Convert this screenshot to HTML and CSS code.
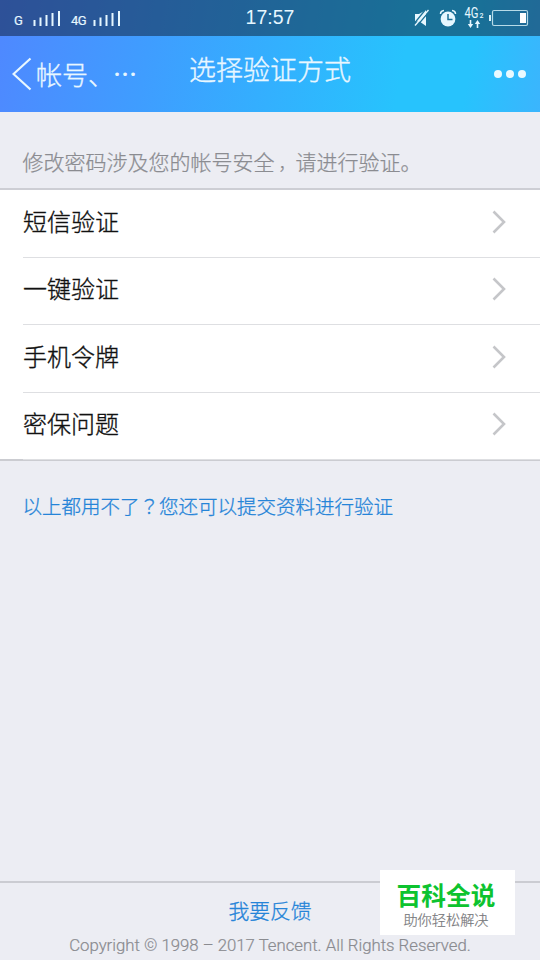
FILE: index.html
```html
<!DOCTYPE html>
<html lang="zh-CN">
<head>
<meta charset="utf-8">
<title>选择验证方式</title>
<link rel="stylesheet" href="styles.css">
</head>
<body>
<div class="screen">
  <div class="top">
    <div class="status">
      <div class="signals">
        <span class="net">G</span>
        <svg class="bars" width="28" height="17" viewBox="0 0 28 17"><path d="M1.500 10v6M7.500 7.500v8.500M13.500 5v11M19.500 3v13M26 1v15" stroke="#e6f7ff" stroke-width="2"/></svg>
        <span class="net net-4g">4G</span>
        <svg class="bars" width="28" height="17" viewBox="0 0 28 17"><path d="M1.500 10v6M7.500 7.500v8.500M13.500 5v11M19.500 3v13M26 1v15" stroke="#e6f7ff" stroke-width="2"/></svg>
      </div>
      <div class="clock">17:57</div>
      <div class="indicators">
        <svg width="128" height="36" viewBox="412 0 128 36" fill="none">
          <path d="M415 14h4l7-4v16l-6.500-4.500h-4.500z" fill="#e6f7ff"/>
          <path d="M416.500 26.500l13-15.500" stroke="#1b7096" stroke-width="1.200"/>
          <path d="M414.200 23.500l11-13.500" stroke="#1b7096" stroke-width="1.200"/>
          <path d="M415 25.500l13.500-15.500" stroke="#e6f7ff" stroke-width="1.300"/>
          <circle cx="448" cy="19" r="7.400" fill="#e6f7ff"/>
          <path d="M440.500 14q0-3 3.500-3.500M455.500 14q0-3-3.500-3.500" stroke="#e6f7ff" stroke-width="1.500"/>
          <path d="M448 14v5.500h4.500" stroke="#1b7096" stroke-width="1.500"/>
          <text class="mini" x="464.500" y="18" textLength="14" lengthAdjust="spacingAndGlyphs">4G</text>
          <text class="tiny" x="479.500" y="17.500">2</text>
          <path d="M470.500 20v6M477.500 28v-6" stroke="#e6f7ff" stroke-width="1.600"/>
          <path d="M467.800 24h5.400l-2.700 4zM474.800 24h5.400l-2.700-4z" fill="#e6f7ff"/>
          <rect x="492.500" y="10.500" width="35" height="15" rx="1.500" stroke="#b7dbe8" stroke-width="1.200"/>
          <path d="M489 15h2v6h-2z" fill="#d8f1fa"/>
          <path d="M520 13h6v10h-6z" fill="#fff"/>
        </svg>
      </div>
    </div>
    <div class="nav">
      <div class="back">
        <svg width="20" height="34" viewBox="0 0 20 34"><path d="M18.500 1.500L1.500 17l17 15.500" fill="none" stroke="#e9f7ff" stroke-width="2.200"/></svg>
        <span class="back-text">帐号、</span><span class="ellipsis">…</span>
      </div>
      <h1 class="title">选择验证方式</h1>
      <div class="more"><i class="dot"></i><i class="dot"></i><i class="dot"></i></div>
    </div>
  </div>
  <p class="hint">修改密码涉及您的帐号安全<span class="comma">，</span>请进行验证。</p>
  <ul class="list">
    <li class="item"><span>短信验证</span><svg class="chev" width="14" height="24" viewBox="0 0 14 24"><path d="M1.500 1.500L12 12 1.500 22.500"/></svg></li>
    <li class="item"><span>一键验证</span><svg class="chev" width="14" height="24" viewBox="0 0 14 24"><path d="M1.500 1.500L12 12 1.500 22.500"/></svg></li>
    <li class="item"><span>手机令牌</span><svg class="chev" width="14" height="24" viewBox="0 0 14 24"><path d="M1.500 1.500L12 12 1.500 22.500"/></svg></li>
    <li class="item"><span>密保问题</span><svg class="chev" width="14" height="24" viewBox="0 0 14 24"><path d="M1.500 1.500L12 12 1.500 22.500"/></svg></li>
  </ul>
  <a class="link">以上都用不了<span class="question" lang="zh-TW">？</span>您还可以提交资料进行验证</a>
  <div class="footer">
    <a class="feedback">我要反馈</a>
    <p class="copyright">Copyright © 1998 – 2017 Tencent. All Rights Reserved.</p>
  </div>
  <div class="badge">
    <div class="badge-name">百科全说</div>
    <div class="badge-sub">助你轻松解决</div>
  </div>
</div>
</body>
</html>
```
FILE: styles.css
```css
* { box-sizing: border-box; margin: 0; padding: 0; }
body {
  width: 540px;
  height: 960px;
  overflow: hidden;
  background: #ecedf3;
  font-family: "Liberation Sans", "Noto Sans CJK SC", sans-serif;
  font-weight: 300;
}
.screen {
  position: relative;
  display: flex;
  flex-direction: column;
  height: 960px;
}
.top {
  height: 112px;
  background: linear-gradient(100deg, #4f88ff 0%, #3f9dff 28%, #27c3fd 74%, #27c3fd 86%, #3bb5fd 100%);
}
.status {
  display: grid;
  grid-template-columns: 1fr auto 1fr;
  height: 36px;
  background: rgba(10, 20, 40, 0.48);
  color: #e6f7ff;
}
.signals { display: flex; padding: 10px 0 0 14px; }
.net { width: 19px; padding-top: 2px; font: 400 13px/17px Roboto, sans-serif; -webkit-text-stroke: 0.2px; }
.net-4g { width: 22px; margin-left: 10px; letter-spacing: -0.5px; }
.clock { font: 400 19.500px/35px "Liberation Sans", sans-serif; }
.indicators { display: flex; justify-content: flex-end; }
.mini { font: 400 14px Roboto, sans-serif; fill: #e6f7ff; }
.tiny { font: 500 7px Roboto, sans-serif; fill: #e6f7ff; }
.nav {
  display: grid;
  grid-template-columns: 189px 1fr auto;
  height: 76px;
  padding-right: 14px;
  color: #e9f7ff;
  -webkit-text-stroke: 0.35px;
}
.back { display: flex; align-items: center; padding-left: 12px; font-size: 26px; }
.back-text { margin-left: 4px; padding-bottom: 2px; }
.ellipsis { margin-left: -1px; padding-bottom: 2px; font-size: 24px; line-height: 30px; font-family: "Noto Sans CJK SC", sans-serif; -webkit-text-stroke: 0.8px; }
.title { font-size: 27px; font-weight: 300; line-height: 71px; }
.more { display: flex; align-items: center; gap: 4px; }
.dot { width: 8px; height: 8px; border-radius: 50%; background: #e9f9ff; }
.hint {
  height: 76px;
  padding: 36px 0 0 22.500px;
  font-size: 21px;
  line-height: 30px;
  color: #8b8c91;
  -webkit-text-stroke: 0.25px;
}
.comma { padding-left: 4px; font-size: 17px; }
.list {
  height: 273px;
  list-style: none;
  background: #fff;
  border-top: 2px solid #cdced4;
  border-bottom: 2px solid #cbccd1;
}
.item {
  display: flex;
  justify-content: space-between;
  align-items: center;
  height: 67.500px;
  margin-left: 23px;
  padding: 0 34px 3px 0;
  border-bottom: 1.500px solid #dedfe2;
  font-size: 24px;
  color: #111;
  -webkit-text-stroke: 0.35px;
}
.item span { padding-bottom: 3px; }
.item:last-child { height: 67px; }
.chev { fill: none; stroke: #c5c6c9; stroke-width: 2.600; }
.link {
  padding: 30px 0 0 22.500px;
  font-size: 19.500px;
  line-height: 32px;
  color: #2584d8;
  -webkit-text-stroke: 0.3px;
}
.question { font-family: "Noto Sans CJK TC", sans-serif; line-height: 1; }
.footer {
  height: 79px;
  margin-top: auto;
  border-top: 2px solid #cbccd2;
  text-align: center;
}
.feedback { display: block; padding-top: 13px; font-size: 20.800px; line-height: 32px; color: #2584d8; -webkit-text-stroke: 0.3px; }
.copyright { margin-top: 6px; font: 300 16.750px/22px Roboto, sans-serif; color: #8a8b90; white-space: nowrap; -webkit-text-stroke: 0.2px; }
.badge {
  position: absolute;
  left: 380px;
  top: 870px;
  width: 135px;
  height: 65px;
  padding: 13px 3px 0 0;
  background: #fff;
  text-align: center;
}
.badge-name { font-size: 24.700px; line-height: 28px; font-weight: 700; color: #0dc32f; }
.badge-sub { font-size: 14.200px; line-height: 19px; color: #77787b; -webkit-text-stroke: 0.2px; }
```
